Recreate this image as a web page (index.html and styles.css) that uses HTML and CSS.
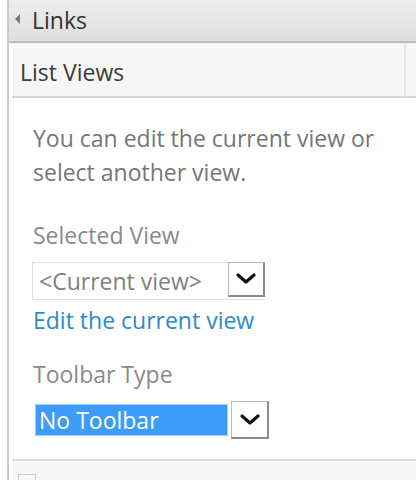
FILE: index.html
```html
<!DOCTYPE html>
<html>
<head>
<meta charset="utf-8">
<link rel="stylesheet" href="styles.css">
</head>
<body>
<div class="panel">
  <div class="topbar"><span class="tri"></span><span class="topbar-title">Links</span></div>
  <div class="section">
    <div class="header-row">
      <div class="header">List Views</div>
      <div class="header-next"></div>
    </div>
    <div class="content">
      <p class="desc">You can edit the current view or select another view.</p>
      <div class="label">Selected View</div>
      <div class="select">
        <div class="select-value">&lt;Current view&gt;</div>
        <div class="select-btn">
          <svg width="22" height="14" viewBox="0 0 22 14"><path d="M3 3 L11 10 L19 3" fill="none" stroke="#111" stroke-width="3.2" stroke-linecap="round" stroke-linejoin="round"/></svg>
        </div>
      </div>
      <a class="link" href="#">Edit the current view</a>
      <div class="label label2">Toolbar Type</div>
      <div class="select select2">
        <div class="select-value selected">No Toolbar</div>
        <div class="select-btn">
          <svg width="22" height="14" viewBox="0 0 22 14"><path d="M3 3 L11 10 L19 3" fill="none" stroke="#111" stroke-width="3.2" stroke-linecap="round" stroke-linejoin="round"/></svg>
        </div>
      </div>
    </div>
    <div class="footer"><span class="chk"></span></div>
  </div>
</div>
</body>
</html>
```
FILE: styles.css
```css
html, body {
  margin: 0;
  padding: 0;
  background: #fff;
}
body {
  width: 416px;
  height: 480px;
  overflow: hidden;
  font-family: "Open Sans", "Noto Sans", sans-serif;
  font-size: 23px;
}
.panel {
  margin-left: 7px;
  border-left: 2px solid #c9c9c9;
  height: 480px;
  display: flex;
  flex-direction: column;
}
.topbar {
  height: 41px;
  background: linear-gradient(#ededed, #dedede);
  border-bottom: 2px solid #bdbdbd;
  display: flex;
  align-items: center;
  padding-left: 6px;
}
.tri {
  width: 0;
  height: 0;
  border-top: 5px solid transparent;
  border-bottom: 5px solid transparent;
  border-right: 5px solid #777;
  margin-right: 12px;
  margin-top: -4px;
}
.topbar-title {
  color: #333;
  line-height: 31px;
}
.section {
  padding-left: 3px;
  flex: 1;
  display: flex;
  flex-direction: column;
}
.header-row {
  display: flex;
  height: 55px;
}
.header {
  flex: 1;
  background: #f6f6f6;
  border-bottom: 2px solid #d6d6d6;
  border-right: 2px solid #e6e6e6;
  padding: 14px 0 0 8px;
  color: #3a3a3a;
  line-height: 31px;
}
.header-next {
  width: 10px;
  background: #f6f6f6;
  border-bottom: 2px solid #d6d6d6;
}
.content {
  padding: 23px 0 0 21px;
  height: 338px;
}
.desc {
  margin: 0;
  line-height: 34px;
  color: #767676;
  width: 360px;
}
.label {
  margin-top: 31px;
  color: #8a8a8a;
  line-height: 30px;
}
.select {
  margin-top: 12px;
  margin-left: -1px;
  width: 233px;
  height: 38px;
  display: flex;
  border: 1px solid #e0e0e0;
  border-right: none;
  box-sizing: border-box;
}
.select-value {
  flex: 1;
  color: #808080;
  display: flex;
  align-items: center;
  padding-left: 6px;
  white-space: nowrap;
}
.select-btn {
  width: 37px;
  margin: -1px 0 2px 0;
  background: #fff;
  border: 1px solid #b8b8b8;
  border-right: 2px solid #8c8c8c;
  border-bottom: 2px solid #8c8c8c;
  box-sizing: border-box;
  display: flex;
  align-items: center;
  justify-content: center;
}
.link {
  display: block;
  margin-top: 5px;
  color: #2d8acc;
  text-decoration: none;
  line-height: 30px;
}
.label2 {
  margin-top: 24px;
}
.select2 {
  margin-top: 12px;
  margin-left: 1px;
  width: 235px;
  height: 38px;
  border: none;
}
.select2 .select-value {
  background: #3d9cf5;
  color: #fff;
  margin: 3px 3px 3px 1px;
  padding-left: 3px;
  border: 1px solid #99d4ff;
}
.select2 .select-btn {
  width: 38px;
  margin: 0;
}
.footer {
  flex: 1;
  border-top: 2px solid #dcdcdc;
  background: #f7f7f7;
  position: relative;
}
.chk {
  position: absolute;
  left: 6px;
  top: 13px;
  width: 16px;
  height: 8px;
  border: 1px solid #ccc;
  border-bottom: none;
}
```
